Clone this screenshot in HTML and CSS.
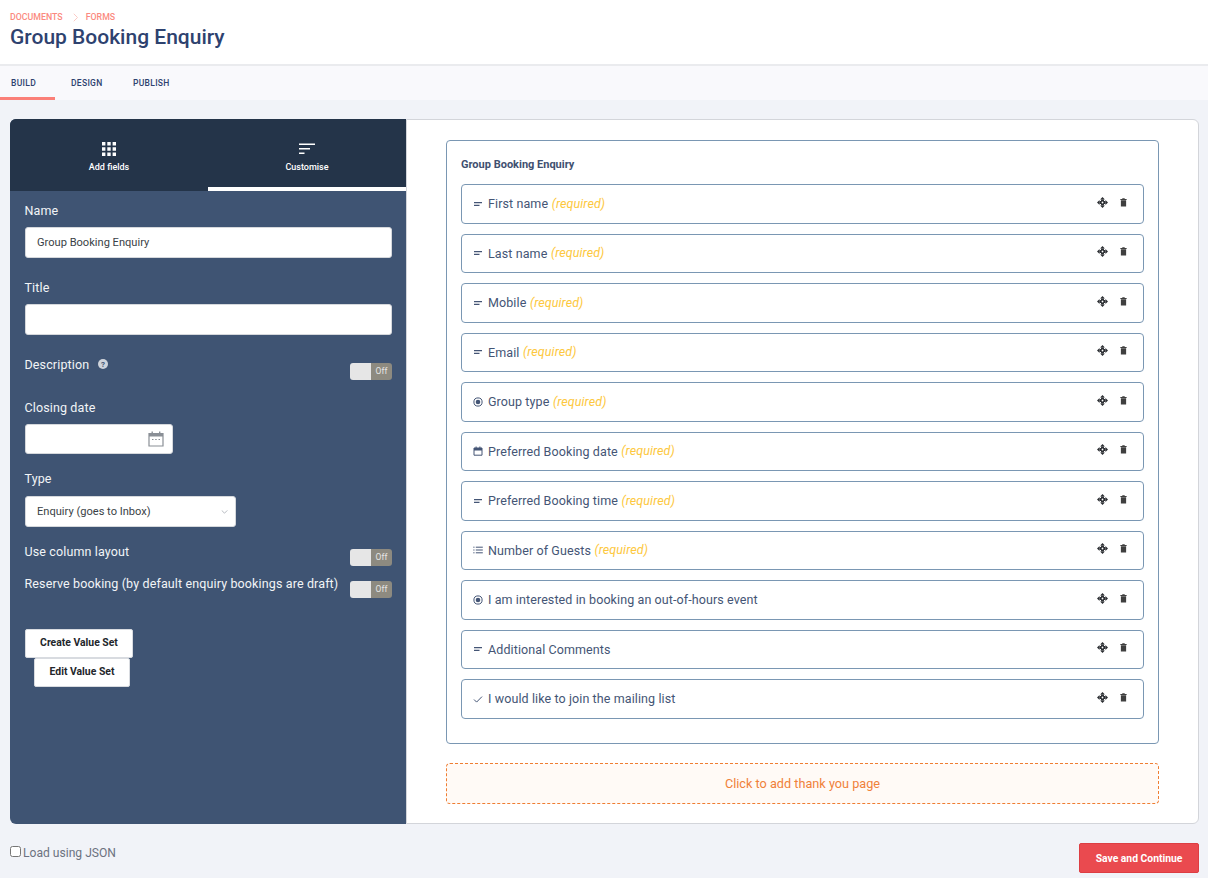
FILE: index.html
```html
<!DOCTYPE html>
<html lang="en">
<head>
<meta charset="utf-8">
<title>Group Booking Enquiry</title>
<link rel="stylesheet" href="styles.css">
</head>
<body>
<svg class="defs" width="0" height="0">
  <symbol id="i-text" viewBox="0 0 10 10"><path d="M1 3.600h8M1 6.400h5.500" fill="none" stroke="currentColor" stroke-width="1.100"/></symbol>
  <symbol id="i-radio" viewBox="0 0 10 10"><circle cx="5" cy="5" r="4.100" fill="none" stroke="currentColor" stroke-width="1"/><circle cx="5" cy="5" r="2.300" fill="currentColor"/></symbol>
  <symbol id="i-date" viewBox="0 0 10 10"><path d="M1 2h8v7.200H1z" fill="none" stroke="currentColor" stroke-width="1"/><path d="M1 2h8v2.400H1zM2.600.6h1v1.600h-1zM6.400.6h1v1.600h-1z" fill="currentColor"/></symbol>
  <symbol id="i-list" viewBox="0 0 10 10"><path d="M0.300 2.200h1.200M0.300 5h1.200M0.300 7.800h1.200M2.800 2.200h7M2.800 5h7M2.800 7.800h7" fill="none" stroke="currentColor" stroke-width="1"/></symbol>
  <symbol id="i-check" viewBox="0 0 10 10"><path d="M1 5.500l2.600 2.600L9 2.600" fill="none" stroke="currentColor" stroke-width="1"/></symbol>
  <symbol id="i-move" viewBox="0 0 12 12"><path d="M6 0l2.600 2.800H3.400zM6 12l2.600-2.800H3.400zM0 6l2.800-2.600v5.200zM12 6L9.200 3.400v5.200z" fill="currentColor"/><path d="M4.400 2.800h3.200v1.600h1.600v3.200H7.600v1.600H4.400V7.600H2.800V4.400h1.600z" fill="currentColor"/><circle cx="6" cy="6" r="1" fill="#fff"/></symbol>
  <symbol id="i-trash" viewBox="0 0 8 10"><path d="M1 2.400h6v7.200H1zM0.400 1h7.200v1H.4zM2.600.2h2.800v1H2.600z" fill="currentColor"/></symbol>
</svg>

<header class="top">
  <nav class="crumbs"><span>DOCUMENTS</span>
    <svg class="crumb-sep" viewBox="0 0 8 12" width="6" height="9"><path d="M1 1l5 5-5 5" fill="none" stroke="currentColor" stroke-width="1.200"/></svg>
    <span>FORMS</span></nav>
  <h1 class="page-title">Group Booking Enquiry</h1>
</header>

<nav class="tabs">
  <a class="tab tab-active">BUILD</a>
  <a class="tab">DESIGN</a>
  <a class="tab">PUBLISH</a>
</nav>

<main class="builder">
  <section class="side">
    <div class="side-tabs">
      <div class="side-tab">
        <svg class="side-icon" viewBox="0 0 14 14" width="14" height="14"><path fill="currentColor" d="M0 0h3.400v3.400H0zM5.300 0h3.400v3.400H5.300zM10.600 0H14v3.400h-3.400zM0 5.300h3.400v3.400H0zM5.300 5.300h3.400v3.400H5.300zM10.600 5.300H14v3.400h-3.400zM0 10.600h3.400V14H0zM5.300 10.600h3.400V14H5.300zM10.600 10.600H14V14h-3.400z"/></svg>
        <span>Add fields</span>
      </div>
      <div class="side-tab side-tab-active">
        <svg class="side-icon" viewBox="0 0 16 12" width="16" height="12"><path fill="currentColor" d="M0 .5h16v1.500H0zM0 5h11v1.500H0zM0 9.500h5.500v1.500H0z"/></svg>
        <span>Customise</span>
      </div>
    </div>
    <div class="side-body">
      <label class="lbl lbl-name">Name</label>
      <input class="inp inp-name" type="text" value="Group Booking Enquiry">
      <label class="lbl lbl-title">Title</label>
      <input class="inp" type="text">
      <div class="row row-desc">
        <span class="lbl-inline">Description
          <svg class="help" viewBox="0 0 10 10" width="10" height="10"><circle cx="5" cy="5" r="5" fill="#cfd4db"/><text x="5" y="7.800" text-anchor="middle" class="help-q">?</text></svg>
        </span>
        <span class="toggle"><i class="knob"></i><b class="off">Off</b></span>
      </div>
      <label class="lbl lbl-closing">Closing date</label>
      <div class="date-inp">
        <svg viewBox="0 0 16 16" width="16" height="16" class="cal"><path d="M1 2.500h14V15H1z" fill="none" stroke="#8a8f96" stroke-width="1.200"/><path d="M1 2.500h14v3H1zM3.500 .5h1.400v2.500H3.500zM11 .5h1.400v2.500H11z" fill="#8a8f96"/><path d="M4 8.500h1.500M7.200 8.500h1.500M10.500 8.500H12" stroke="#8a8f96" stroke-width="1.200"/></svg>
      </div>
      <label class="lbl lbl-type">Type</label>
      <div class="select"><span>Enquiry (goes to Inbox)</span>
        <svg viewBox="0 0 8 5" width="7" height="4" class="chev"><path d="M.5.500L4 4 7.500.5" fill="none" stroke="#9aa0a8" stroke-width=".9"/></svg>
      </div>
      <div class="row row-col"><span class="lbl-inline">Use column layout</span><span class="toggle"><i class="knob"></i><b class="off">Off</b></span></div>
      <div class="row row-res"><span class="lbl-inline">Reserve booking (by default enquiry bookings are draft)</span><span class="toggle"><i class="knob"></i><b class="off">Off</b></span></div>
      <div class="value-btns">
        <button class="vbtn vbtn-create">Create Value Set</button>
        <button class="vbtn vbtn-edit">Edit Value Set</button>
      </div>
    </div>
  </section>

  <section class="canvas">
    <div class="form-card">
      <h2 class="form-title">Group Booking Enquiry</h2>
      <div class="items">
        <div class="item"><svg class="ico"><use href="#i-text"/></svg><span>First name</span><em>(required)</em><svg class="move"><use href="#i-move"/></svg><svg class="trash"><use href="#i-trash"/></svg></div>
        <div class="item"><svg class="ico"><use href="#i-text"/></svg><span>Last name</span><em>(required)</em><svg class="move"><use href="#i-move"/></svg><svg class="trash"><use href="#i-trash"/></svg></div>
        <div class="item"><svg class="ico"><use href="#i-text"/></svg><span>Mobile</span><em>(required)</em><svg class="move"><use href="#i-move"/></svg><svg class="trash"><use href="#i-trash"/></svg></div>
        <div class="item"><svg class="ico"><use href="#i-text"/></svg><span>Email</span><em>(required)</em><svg class="move"><use href="#i-move"/></svg><svg class="trash"><use href="#i-trash"/></svg></div>
        <div class="item"><svg class="ico"><use href="#i-radio"/></svg><span>Group type</span><em>(required)</em><svg class="move"><use href="#i-move"/></svg><svg class="trash"><use href="#i-trash"/></svg></div>
        <div class="item"><svg class="ico"><use href="#i-date"/></svg><span>Preferred Booking date</span><em>(required)</em><svg class="move"><use href="#i-move"/></svg><svg class="trash"><use href="#i-trash"/></svg></div>
        <div class="item"><svg class="ico"><use href="#i-text"/></svg><span>Preferred Booking time</span><em>(required)</em><svg class="move"><use href="#i-move"/></svg><svg class="trash"><use href="#i-trash"/></svg></div>
        <div class="item"><svg class="ico"><use href="#i-list"/></svg><span>Number of Guests</span><em>(required)</em><svg class="move"><use href="#i-move"/></svg><svg class="trash"><use href="#i-trash"/></svg></div>
        <div class="item"><svg class="ico"><use href="#i-radio"/></svg><span>I am interested in booking an out-of-hours event</span><svg class="move"><use href="#i-move"/></svg><svg class="trash"><use href="#i-trash"/></svg></div>
        <div class="item"><svg class="ico"><use href="#i-text"/></svg><span>Additional Comments</span><svg class="move"><use href="#i-move"/></svg><svg class="trash"><use href="#i-trash"/></svg></div>
        <div class="item"><svg class="ico"><use href="#i-check"/></svg><span>I would like to join the mailing list</span><svg class="move"><use href="#i-move"/></svg><svg class="trash"><use href="#i-trash"/></svg></div>
      </div>
    </div>
    <div class="thanks">Click to add thank you page</div>
  </section>
</main>

<footer class="foot">
  <label class="json"><input type="checkbox" class="json-box"><span>Load using JSON</span></label>
  <button class="save">Save and Continue</button>
</footer>
</body>
</html>
```
FILE: styles.css
```css
* { box-sizing: border-box; }
html, body { margin: 0; padding: 0; }
body { width: 1208px; height: 878px; overflow: hidden; background: #f1f3f8; font-family: Roboto, "Liberation Sans", sans-serif; }
.defs { position: absolute; }

.top { height: 66px; background: #fff; border-bottom: 2px solid #eaebee; padding: 12px 10px 0; }
.crumbs { display: flex; align-items: center; height: 10px; font-size: 8.800px; font-weight: 500; color: #fb8a80; }
.crumb-sep { margin: 0 7px 0 10px; color: #fbc4be; }
.page-title { margin: 3px 0 0; font-size: 21px; line-height: 24px; font-weight: 500; color: #2e426f; }

.tabs { height: 34px; background: #f9f9fc; display: flex; }
.tab { width: 61px; height: 34px; padding-top: 12px; font-size: 8.500px; line-height: 11px; font-weight: 500; color: #2e426f; letter-spacing: .3px; }
.tab:first-child { width: 55px; padding-left: 11px; border-bottom: 3px solid #fb8078; }
.tab:nth-child(2) { padding-left: 16px; }
.tab:nth-child(3) { padding-left: 17px; }

.builder { display: flex; margin: 19px 9px 0 10px; height: 705px; }
.side { width: 396px; background: #3f5473; border-radius: 6px 0 0 6px; overflow: hidden; display: flex; flex-direction: column; flex: none; }
.side-tabs { display: flex; height: 72px; background: #243449; color: #fff; }
.side-tab { width: 198px; display: flex; flex-direction: column; align-items: center; padding-top: 23px; font-size: 9px; font-weight: 500; }
.side-tab span { margin-top: 5px; line-height: 12px; }
.side-tab .side-icon { display: block; height: 14px; }
.side-tab-active { border-bottom: 4px solid #fff; }

.side-body { padding: 10px 14px 0 15px; flex: 1; color: #f2f4f7; }
.lbl { display: block; font-size: 12.500px; line-height: 20px; margin-bottom: 6.500px; margin-left: -0.500px; letter-spacing: .13px; }
.lbl-name { margin-bottom: 6px; }
.lbl-title { margin-top: 19.500px; margin-bottom: 6.500px; }
.lbl-closing { margin-top: 23px; margin-bottom: 6px; }
.lbl-type { margin-top: 15px; margin-bottom: 7px; }
.inp { display: block; width: 367px; height: 31px; border: 1px solid #d5d8dc; border-radius: 3px; background: #fff; padding: 0 11px; font: 11.100px Roboto, sans-serif; color: #3a3f46; outline: none; }
.row { display: flex; justify-content: space-between; align-items: flex-start; width: 367px; }
.row-desc { margin-top: 20px; height: 20px; }
.row-col { margin-top: 15px; height: 20px; }
.row-res { margin-top: 12px; height: 20px; }
.lbl-inline { font-size: 12.500px; line-height: 20px; margin-left: -0.500px; letter-spacing: .13px; }
.help { margin-left: 6px; vertical-align: 0; }
.help-q { font: 700 8px Roboto, sans-serif; fill: #3f5473; }
.toggle { display: flex; width: 42px; height: 17px; margin-top: 8px; border-radius: 3px; overflow: hidden; }
.row-col .toggle, .row-res .toggle { margin-top: 7px; }
.knob { width: 21px; background: #e6e6e6; display: block; }
.off { width: 21px; background: #8d8a80; color: #e6e6e6; font-size: 8.500px; font-weight: 400; text-align: center; line-height: 17px; }

.date-inp { width: 148px; height: 30px; background: #fff; border: 1px solid #d5d8dc; border-radius: 3px; display: flex; justify-content: flex-end; align-items: center; padding-right: 8px; }
.select { width: 211px; height: 31px; background: #fff; border: 1px solid #d5d8dc; border-radius: 3px; display: flex; justify-content: space-between; align-items: center; padding: 0 7px 0 11px; font-size: 11.100px; color: #3a3f46; }
.value-btns { margin-top: 35px; display: flex; flex-direction: column; align-items: flex-start; }
.vbtn { display: block; background: #fff; border: 1px solid #d8dbe0; border-radius: 2px; font: 700 10.400px Roboto, sans-serif; color: #23262b; height: 29px; padding: 0; }
.vbtn-create { width: 108px; padding-bottom: 2px; }
.vbtn-edit { width: 96px; margin-left: 9px; padding-bottom: 2px; }

.canvas { flex: 1; background: #fff; border: 1px solid #d3d5da; border-radius: 0 6px 6px 0; padding: 20px 39px 0 39px; }
.form-card { width: 713px; height: 604px; border: 1px solid #7a97b3; border-radius: 4px; padding: 18px 14px 0; }
.form-title { margin: 0 0 13px; font-size: 11px; line-height: 12px; font-weight: 700; color: #3f5070; }
.items { display: flex; flex-direction: column; gap: 10px; }
.item { display: flex; align-items: center; height: 39.500px; border: 1px solid #7a97b3; border-radius: 4px; padding: 0 16px 0 11px; font-size: 12.500px; color: #445575; }
.item span { margin-right: 3.500px; letter-spacing: .1px; }
.item em { color: #fdc83e; font-style: italic; font-weight: 400; margin-top: -1px; letter-spacing: .1px; }
.ico { width: 10px; height: 10px; margin-right: 5px; color: #445575; flex: none; }
.move { width: 11px; height: 11px; margin-left: auto; color: #2c2f33; margin-top: -3px; }
.trash { width: 7px; height: 9px; margin-left: 12px; margin-top: -3px; color: #3f3f3f; }
.thanks { width: 713px; height: 41px; margin-top: 19px; border: 1px dashed #ef7d32; border-radius: 4px; background: #fffaf6; color: #f0813a; font-size: 12.700px; line-height: 40px; text-align: center; }

.foot { display: flex; justify-content: space-between; align-items: flex-start; padding: 19px 9px 0 10px; }
.json { display: flex; align-items: flex-start; font-size: 12.100px; line-height: 20px; color: #6c7280; }
.json-box { width: 11px; height: 11px; margin: 3px 2px 0 0; }
.save { width: 120px; height: 30px; border: 1px solid #dd3e43; border-radius: 2px; background: #ea4a4f; color: #fff; font: 700 10.350px Roboto, sans-serif; }
```
